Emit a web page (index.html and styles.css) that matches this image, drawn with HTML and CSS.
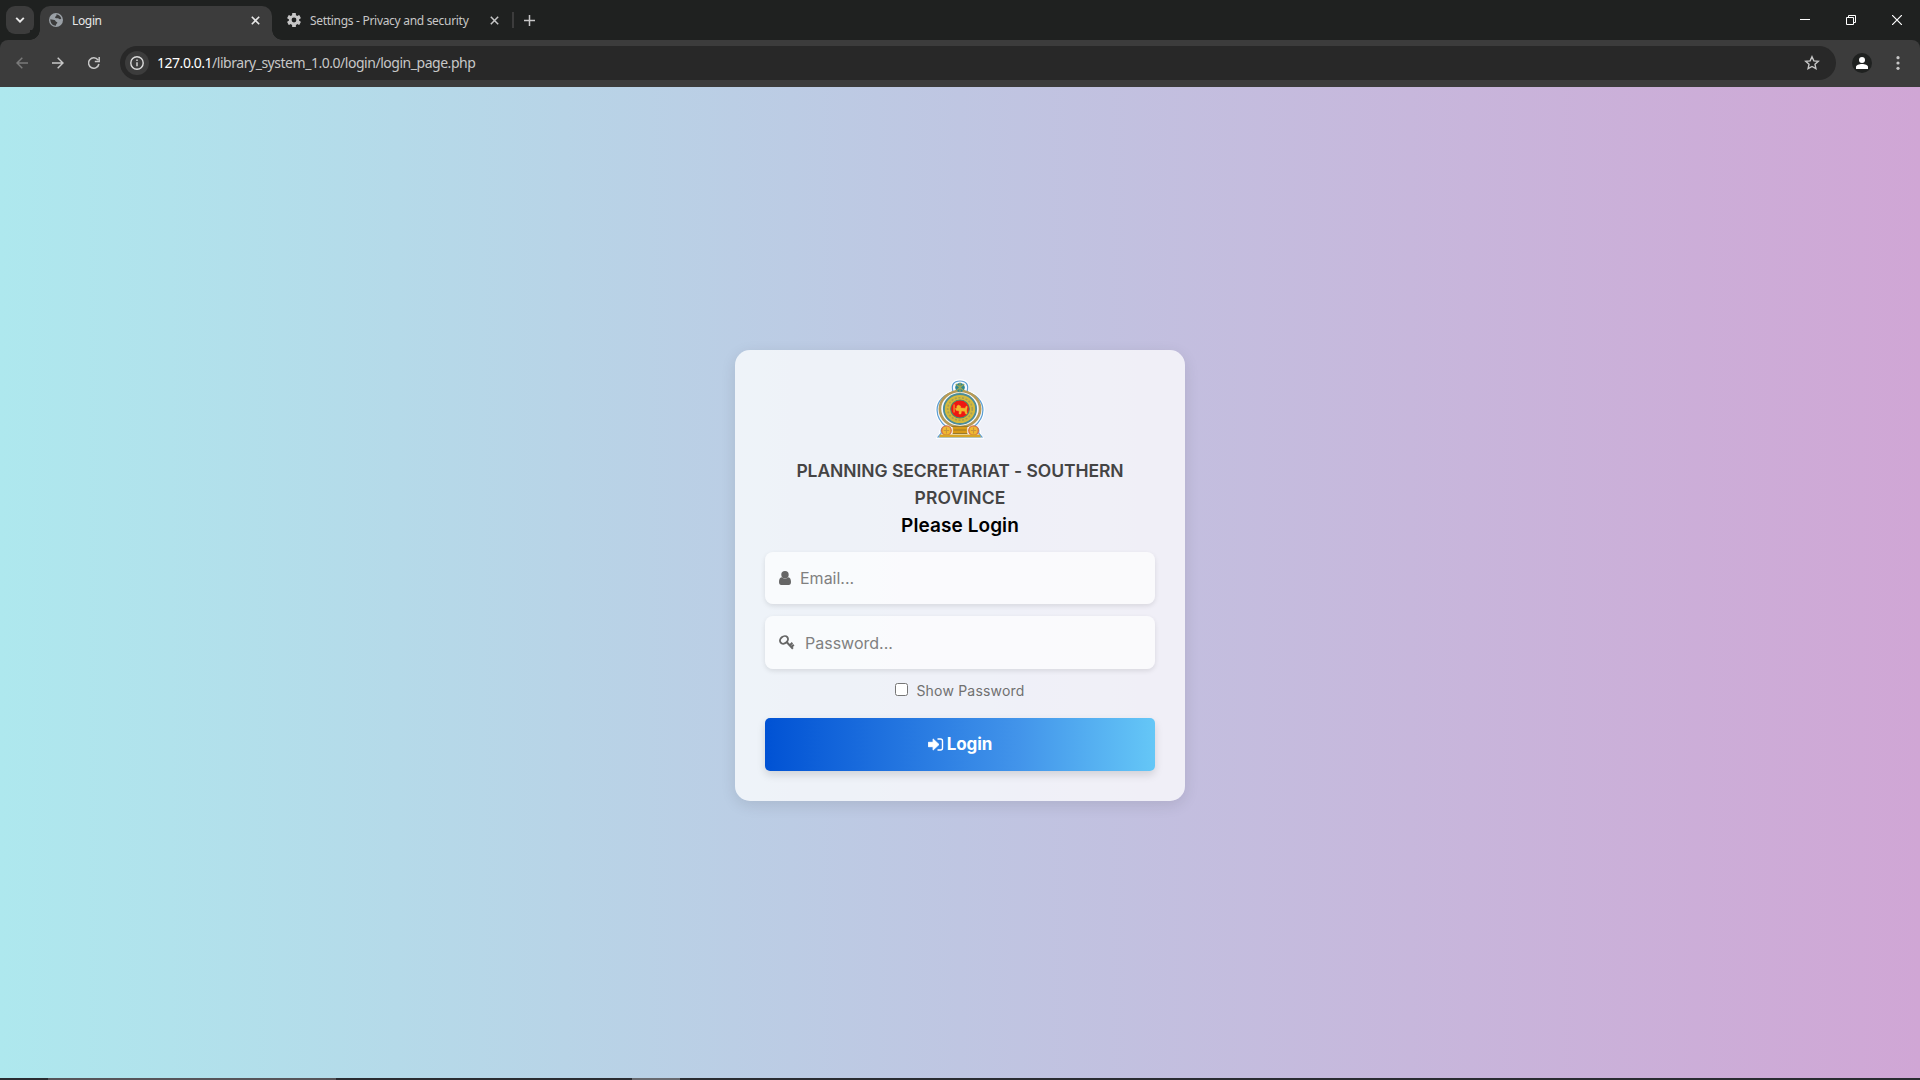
FILE: index.html
```html
<!DOCTYPE html>
<html lang="en">
<head>
<meta charset="utf-8">
<title>Login</title>
<link rel="stylesheet" href="styles.css">
</head>
<body>
<div class="window">
  <header class="tabstrip">
    <button class="tab-search" aria-label="Search tabs"><svg width="10" height="6" viewBox="0 0 10 6"><path d="M1.2 .9 5 4.7 8.800 .9" fill="none" stroke="#e8e8e8" stroke-width="1.9"/></svg></button>
    <div class="tab tab-active">
      <svg class="favicon" width="14" height="14" viewBox="0 0 14 14"><circle cx="7" cy="7" r="7" fill="#9aa0a6"/><path d="M7.500 1.300c2 .3 4 1.800 4.800 4.200-.8 1-2 .8-2.800 0-.6-.8-2 .1-3-.5-.9-.7-.3-1.500.5-1.800.7-.3.3-1.100.5-1.900zM1.300 6.200 5.600 7c1 .3.700 1.700 2 1.900 1 .2.900 1.200.2 1.700-.8.500-.5 1.300-1 2.100-3-.1-5.600-2.700-5.500-6.500z" fill="#3c3c3c"/></svg>
      <span class="tab-title login-title">Login</span>
      <svg class="close" width="9" height="9" viewBox="0 0 9 9"><path d="m.8.800 7.400 7.400M8.200.800.8 8.200" stroke="#e8e8e8" stroke-width="1.600"/></svg>
    </div>
    <div class="tab tab-idle">
      <svg class="favicon" width="14" height="14" viewBox="0 0 14 14"><g fill="#c7c7c7"><circle cx="7" cy="7" r="5.200"/><rect x="5.100" y="0" width="3.800" height="14" rx=".6"/><rect x="5.100" y="0" width="3.800" height="14" rx=".6" transform="rotate(60 7 7)"/><rect x="5.100" y="0" width="3.800" height="14" rx=".6" transform="rotate(120 7 7)"/></g><circle cx="7" cy="7" r="2.400" fill="#1f2120"/></svg>
      <span class="tab-title settings-title">Settings - Privacy and security</span>
      <svg class="close" width="9" height="9" viewBox="0 0 9 9"><path d="m.8.800 7.400 7.400M8.200.800.8 8.200" stroke="#c7c7c7" stroke-width="1.500"/></svg>
    </div>
    <span class="divider"></span>
    <svg class="new-tab" width="11" height="11" viewBox="0 0 11 11"><path d="M5.500 0v11M0 5.500h11" stroke="#c7c7c7" stroke-width="1.500"/></svg>
    <div class="window-controls">
      <svg width="10" height="10" viewBox="0 0 10 10"><path d="M0 4.500h10" stroke="#fff"/></svg>
      <svg width="10" height="10" viewBox="0 0 10 10"><path d="M.5 2.500h7v7h-7zM2.500 2.500v-2h7v7h-2" fill="none" stroke="#fff"/></svg>
      <svg width="10" height="10" viewBox="0 0 10 10"><path d="m0 0 10 10M10 0 0 10" stroke="#fff" stroke-width="1.200"/></svg>
    </div>
  </header>
  <nav class="toolbar">
    <div class="nav-buttons">
      <svg width="12" height="12" viewBox="0 0 12 12"><path d="M12 6H1.200M6.300.700 1 6l5.300 5.300" fill="none" stroke="#7a7a7a" stroke-width="1.500"/></svg>
      <svg width="12" height="12" viewBox="0 0 12 12"><path d="M0 6h10.800M5.700.700 11 6l-5.300 5.300" fill="none" stroke="#c7c7c7" stroke-width="1.500"/></svg>
      <svg width="12" height="12" viewBox="0 0 12 12"><path d="M10.900 7A5.200 5.200 0 1 1 10 3M11.200 0v4.500H6.800" fill="none" stroke="#c7c7c7" stroke-width="1.500"/></svg>
    </div>
    <div class="omnibox">
      <span class="site-info"><svg width="14" height="14" viewBox="0 0 14 14"><circle cx="7" cy="7" r="6.200" fill="none" stroke="#dcdcdc" stroke-width="1.400"/><path d="M7 6.300v4M7 3.400v1.500" stroke="#dcdcdc" stroke-width="1.400"/></svg></span>
      <span class="url"><b>127.0.0.1</b>/library_system_1.0.0/login/login_page.php</span>
      <svg class="star" width="16" height="16" viewBox="0 0 16 16"><path d="m8 1.800 1.850 4.050 4.450.450-3.320 2.980.950 4.420L8 11.450 4.070 13.700l.95-4.420L1.700 6.300l4.450-.45z" fill="none" stroke="#c7c7c7" stroke-width="1.400"/></svg>
    </div>
    <span class="profile"><svg width="12" height="12" viewBox="0 0 12 12"><circle cx="6" cy="3" r="3" fill="#fff"/><path d="M0 12v-2c0-2 3-3 6-3s6 1 6 3v2z" fill="#fff"/></svg></span>
    <svg class="menu" width="4" height="14" viewBox="0 0 4 14"><g fill="#c7c7c7"><circle cx="2" cy="1.700" r="1.600"/><circle cx="2" cy="7" r="1.600"/><circle cx="2" cy="12.300" r="1.600"/></g></svg>
  </nav>
  <main class="page">
    <form class="card">
      <svg class="emblem" width="50" height="60" viewBox="0 0 48 60" preserveAspectRatio="none">
        <path d="M17 12C14 5 18 1 24 1s10 4 7 11c9 3 16 10 16 19 0 8-4 13-9 17 4 0 6 3 5 6l3 5H2l3-5c-1-3 1-6 5-6-5-4-9-9-9-17 0-9 7-16 16-19z" fill="#f8fbff" stroke="#fff" stroke-width="1.500"/>
        <path d="M17.500 13C15 6 18 2 24 2s9 4 6.500 11C39 15 46 22 46 31c0 8-4 13-9 17 4-.5 6 2 5 6l3 4H3l3-4c-1-4 1-6.500 5-6-5-4-9-9-9-17 0-9 7-16 15.500-18z" fill="none" stroke="#5d9fd4" stroke-width="1.200"/>
        <ellipse cx="24" cy="30" rx="19.300" ry="18" fill="none" stroke="#b79a55" stroke-width="2.600"/>
        <ellipse cx="24" cy="30" rx="15.500" ry="15" fill="#d5b93c" stroke="#4d8c96" stroke-width="1.800"/>
        <ellipse cx="24" cy="30" rx="11.800" ry="11.300" fill="none" stroke="#a9a052" stroke-width="1.600" stroke-dasharray="2 1.500"/>
        <circle cx="24" cy="30" r="9" fill="#ef1712" stroke="#4b8b72"/>
        <path d="M18.300 25.500v8" stroke="#f0a72d" stroke-width="1.100"/>
        <path d="M19.500 29.500 21 29v-2l1.500-1 2 1 .3 2 4.200.2 1-2.200 1 .6-.5 3.400.3 4h-1.500l-.9-2.700-2.900-.3-.6 3H23l.2-3-2.700-.5z" fill="#f0b72d" stroke="#f0b72d" stroke-width=".4"/>
        <circle cx="24" cy="8.500" r="4.600" fill="#2e8791"/><path d="m20 5 8 7m0-7-8 7M24 3.500v10" stroke="#9ca756" stroke-width="1.100"/>
        <path d="M17 48h14v7H17z" fill="#d99b18"/><path d="M16 47.500h16M18 51h12M17 54.500h14" stroke="#9a7929" stroke-width="1.200"/>
        <circle cx="11" cy="51.500" r="4.600" fill="#efb832" stroke="#d8703f" stroke-width="1.300"/><circle cx="37" cy="51.500" r="4.600" fill="#efb832" stroke="#d8703f" stroke-width="1.300"/>
        <path d="M11 48.500v6M8.500 51.500h5M37 48.500v6M34.500 51.500h5" stroke="#c8963a"/>
        <path d="M5 55.500h38l1 2.700H4z" fill="#d7a526"/>
      </svg>
      <h1 class="org"><span class="org-first">PLANNING SECRETARIAT - SOUTHERN</span><br><span class="org-second">PROVINCE</span></h1>
      <h2 class="prompt">Please Login</h2>
      <div class="field">
        <svg width="12" height="14" viewBox="0 0 12 14"><circle cx="6" cy="3.700" r="3.700" fill="#666"/><path d="M2.700 6.300a4.700 4.700 0 0 0 6.600 0C11.200 6.500 12 8.500 12 11c0 2-.8 3-2.300 3H2.300C.8 14 0 13 0 11c0-2.500.8-4.500 2.700-4.700z" fill="#666"/></svg>
        <span class="placeholder email">Email...</span>
      </div>
      <div class="field">
        <svg class="key" width="16" height="15" viewBox="0 0 16 15"><g fill="none" stroke="#666"><ellipse cx="5" cy="4.900" rx="4.300" ry="3.400" stroke-width="1.900" transform="rotate(-40 5 4.900)"/><path d="m7.600 7 6.300 6.700M10.900 10.200l2.500-2.400M12.400 12l2.400-2.200" stroke-width="2"/></g></svg>
        <span class="placeholder password">Password...</span>
      </div>
      <label class="show"><input type="checkbox"><span>Show Password</span></label>
      <button class="submit" type="button"><svg width="16" height="13" viewBox="0 0 16 13"><path d="M.4 4.300h4.700V.900L11 6.500l-5.900 5.600V8.700H.4z" fill="#fff" stroke="#fff" stroke-width=".9" stroke-linejoin="round"/><path d="M9.500 1h3a2 2 0 0 1 2 2v7a2 2 0 0 1-2 2h-3" fill="none" stroke="#fff" stroke-width="1.400"/></svg><span>Login</span></button>
    </form>
  </main>
  <footer class="taskbar"><span class="task-window"></span><span class="task-app"></span></footer>
</div>
</body>
</html>
```
FILE: styles.css
```css
* { box-sizing: border-box; }
body { margin: 0; overflow: hidden; font-family: Inter, "Open Sans", sans-serif; }
svg { display: block; flex: none; }
button { border: 0; padding: 0; }

.window { display: grid; grid-template-rows: 40px 47px 991px 2px; width: 1920px; height: 1080px; background: linear-gradient(#1f2120 60px, #3c3c3c 60px); }

.tabstrip { display: flex; align-items: center; background: #1f2120; font-family: "Noto Sans", sans-serif; }
.tab-search { display: grid; place-items: center; width: 28px; height: 28px; margin-left: 6px; border-radius: 9px; background: #3c3c3c; }
.tab { display: flex; align-items: center; height: 34px; }
.tab-active { position: relative; align-self: flex-end; width: 232px; margin-left: 6px; padding: 0 12px 6px 9px; border-radius: 10px 10px 0 0; background: #3c3c3c; }
.tab-active::before, .tab-active::after { content: ""; position: absolute; bottom: 0; width: 10px; height: 10px; }
.tab-active::before { left: -10px; background: radial-gradient(circle at 0 0, #1f2120 9.500px, #3c3c3c 10px); }
.tab-active::after { right: -10px; background: radial-gradient(circle at 100% 0, #1f2120 9.500px, #3c3c3c 10px); }
.tab-title { margin-left: 9px; padding-top: 2px; font-size: 12px; line-height: 16px; white-space: nowrap; }
.login-title { color: #e8e8e8; letter-spacing: -.35px; }
.tab .close { margin-left: auto; }
.tab-idle { width: 212px; margin-left: 15px; color: #c7c7c7; }
.settings-title { letter-spacing: -.3px; }
.divider { width: 2px; height: 16px; margin-left: 13px; background: #3c3c3c; }
.new-tab { margin-left: 10px; }
.window-controls { display: flex; gap: 36px; margin: 0 18px 0 auto; }

.toolbar { display: flex; align-items: center; padding: 0 0 1px 16px; border-radius: 8px 8px 0 0; background: #3c3c3c; }
.nav-buttons { display: flex; gap: 24px; width: 104px; }
.omnibox { display: flex; align-items: center; width: 1716px; height: 34px; padding: 0 16px 0 5px; border-radius: 17px; background: #282828; }
.site-info { display: grid; place-items: center; width: 24px; height: 24px; border-radius: 12px; background: #3c3c3c; }
.url { margin-left: 8px; font: 14px/20px "Noto Sans", sans-serif; letter-spacing: -.47px; color: #c7c7c7; }
.url b { font-weight: 400; color: #fff; }
.star { margin-left: auto; }
.profile { display: grid; place-items: center; width: 20px; height: 20px; margin-left: 16px; border-radius: 10px; background: #1f2120; }
.menu { margin-left: 24px; }

.page { display: flex; justify-content: center; align-items: flex-start; padding-top: 263px; background: linear-gradient(to right, #aee8ee, #bfc6e2 50%, #d0a6d5); }
.card { display: flex; flex-direction: column; align-items: center; width: 450px; height: 451px; padding: 29px 30px 30px; border-radius: 15px; background: rgba(255, 255, 255, .75); box-shadow: 0 4px 15px rgba(0, 0, 0, .1); }
.org { margin: 18px 0 0; color: #444; font-size: 17.500px; font-weight: 600; line-height: 27px; text-align: center; white-space: nowrap; }
.org-first { letter-spacing: -.07px; }
.org-second { letter-spacing: .15px; }
.prompt { margin: 1px 0 12px; color: #000; font-size: 19px; font-weight: 600; line-height: 28px; letter-spacing: .08px; }
.field { display: flex; align-items: center; width: 390px; height: 53px; margin-bottom: 12px; padding-left: 14px; border-radius: 8px; background: rgba(255, 255, 255, .65); box-shadow: 0 2px 5px rgba(0, 0, 0, .1); }
.placeholder { color: #808080; font-size: 16px; line-height: 24px; }
.email { margin-left: 9px; }
.password { margin-left: 10px; }
.show { display: flex; align-items: center; height: 20px; color: #707070; font-size: 14px; letter-spacing: .2px; }
.show input { width: 13px; height: 13px; margin: 0 8px 2px 0; }
.submit { display: flex; justify-content: center; align-items: center; gap: 3px; width: 390px; height: 54px; margin-top: 17px; border-radius: 5px; background: linear-gradient(to right, #0052d4, #4294ea 65%, #65c7f7); box-shadow: 0 4px 8px rgba(0, 0, 0, .13); color: #fff; font: 700 17px/24px Inter, sans-serif; letter-spacing: -.1px; }

.taskbar { display: flex; background: #2a2c31; }
.task-window { width: 288px; margin-left: 48px; background: #565459; }
.task-app { width: 48px; margin-left: 296px; background: #686a70; }
```
